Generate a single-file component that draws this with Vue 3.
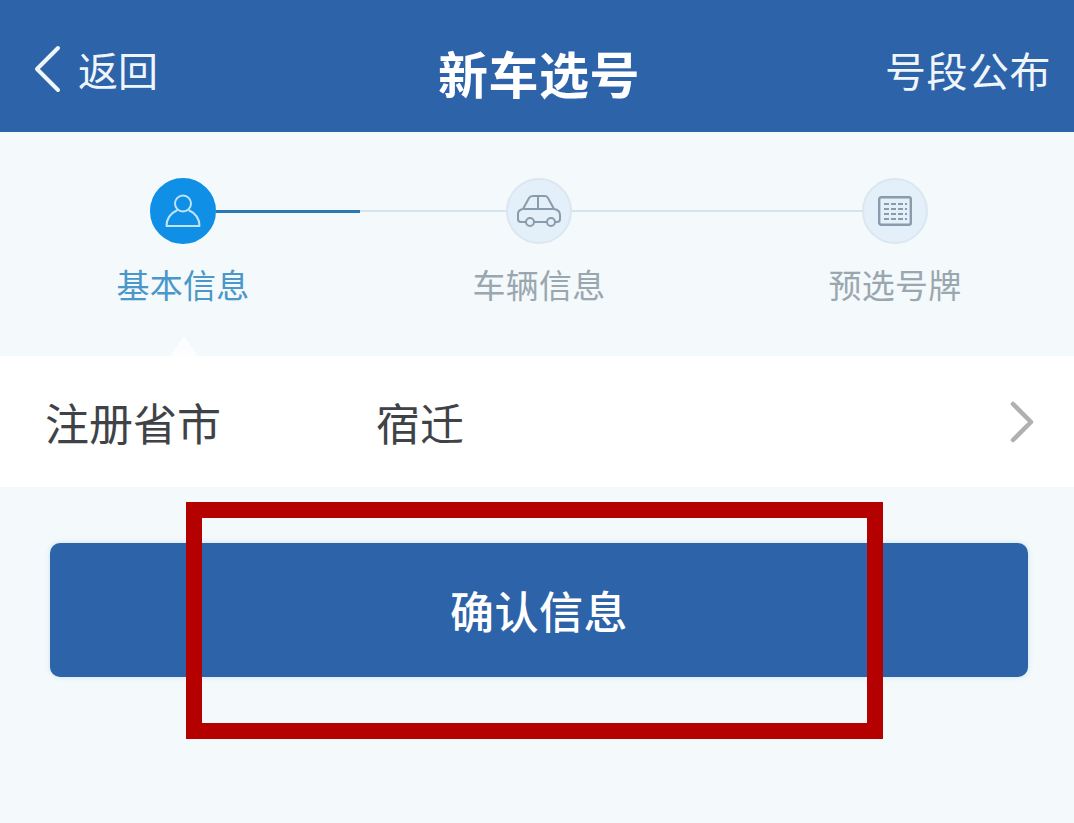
<template>
  <div class="page">
    <header class="nav">
      <div class="nav-back">
        <svg class="back-icon" width="30" height="48" viewBox="0 0 30 48">
          <path d="M26 3 L5 24 L26 45" fill="none" stroke="#f0f5f9" stroke-width="4" stroke-linecap="round" stroke-linejoin="round" />
        </svg>
        <span>返回</span>
      </div>
      <h1 class="nav-title">新车选号</h1>
      <span class="nav-action">号段公布</span>
    </header>

    <section class="steps">
      <div class="track"><div class="track-done"></div></div>
      <div v-for="step in steps" :key="step.label" class="step" :class="{ active: step.active }">
        <div class="step-circle">
          <svg v-if="step.icon === 'user'" width="36" height="36" viewBox="0 0 36 36" fill="none" stroke="#bfe3fb" stroke-width="2">
            <circle cx="18" cy="10.500" r="8" />
            <path d="M12.500 17 C6 20 1.500 25 1.500 33 H34.500 C34.500 25 30 20 23.500 17" stroke-linejoin="round" />
          </svg>
          <svg v-else-if="step.icon === 'car'" width="44" height="32" viewBox="0 0 44 32" fill="none" stroke="#8a9bab" stroke-width="2">
            <path d="M9 27 H4 Q1 27 1 24 V19 Q1 15 6 14 L12 3 Q13 1 16 1 H28 Q30 1 31 3 L37 14 Q43 15 43 20 V24 Q43 27 40 27 H38" stroke-linejoin="round" />
            <path d="M17 27 H30 M6 14 H37 M21 1 V14" />
            <circle cx="13" cy="27" r="4" />
            <circle cx="34" cy="27" r="4" />
          </svg>
          <svg v-else width="34" height="30" viewBox="0 0 34 30" fill="none" stroke="#8a9bab">
            <rect x="1.200" y="1.200" width="31.600" height="27.600" rx="2" stroke-width="2.400" />
            <path d="M6 8 H29 M6 13 H29 M6 18 H29 M6 23 H29" stroke-width="2" stroke-dasharray="5 2" />
          </svg>
        </div>
        <span class="step-label">{{ step.label }}</span>
      </div>
    </section>

    <div class="form-row">
      <i class="caret"></i>
      <span class="form-label">注册省市</span>
      <span class="form-value">宿迁</span>
      <svg class="chevron" width="24" height="42" viewBox="0 0 24 42">
        <path d="M3 3 L21 21 L3 39" fill="none" stroke="#aeb0b2" stroke-width="4.500" stroke-linecap="round" stroke-linejoin="round" />
      </svg>
    </div>

    <div class="action">
      <button class="confirm" type="button">确认信息</button>
      <div class="highlight"></div>
    </div>
  </div>
</template>

<script setup>
const steps = [
  { label: '基本信息', icon: 'user', active: true },
  { label: '车辆信息', icon: 'car', active: false },
  { label: '预选号牌', icon: 'plate', active: false }
]
</script>

<style>
html,
body {
  margin: 0;
  background: #f4f9fb;
}
</style>

<style scoped>
.page {
  height: 823px;
  overflow: hidden;
  background: #f4f9fb;
  font-family: "Noto Sans CJK SC", "Noto Sans", sans-serif;
}

.nav {
  height: 132px;
  background: #2c63a9;
  color: #f0f5f9;
  display: flex;
  align-items: center;
  justify-content: space-between;
  padding: 6px 23px 0 32px;
  box-sizing: border-box;
  position: relative;
}

.nav-back {
  display: flex;
  align-items: center;
  gap: 16px;
  font-size: 40px;
  line-height: 48px;
}

.nav-title {
  position: absolute;
  left: 438px;
  top: 42px;
  margin: 0;
  font-size: 50px;
  line-height: 60px;
  font-weight: 700;
  letter-spacing: 0.5px;
  color: #fff;
}

.nav-action {
  font-size: 41px;
  letter-spacing: 0.5px;
  line-height: 48px;
}

.steps {
  height: 224px;
  box-sizing: border-box;
  padding: 46px 0 0 5px;
  display: grid;
  grid-template-columns: repeat(3, 356px);
  position: relative;
}

.track {
  position: absolute;
  left: 216px;
  top: 78px;
  width: 646px;
  height: 2px;
  background: #d6e3ea;
}

.track-done {
  width: 144px;
  height: 3px;
  background: #2b78b4;
}

.step {
  display: flex;
  flex-direction: column;
  align-items: center;
  position: relative;
}

.step-circle {
  width: 66px;
  height: 66px;
  box-sizing: border-box;
  border-radius: 50%;
  background: #e3eff9;
  border: 2px solid #dbe7f0;
  display: flex;
  align-items: center;
  justify-content: center;
}

.step.active .step-circle {
  background: #0f8fe6;
  border-color: #0f8fe6;
}

.step-label {
  margin-top: 19px;
  font-size: 33px;
  line-height: 42px;
  letter-spacing: 0.200px;
  color: #9aa7b0;
}

.step.active .step-label {
  color: #4b97c9;
}

.form-row {
  height: 131px;
  background: #fff;
  display: flex;
  align-items: center;
  padding: 0 40px 0 45px;
  position: relative;
  font-size: 44px;
  color: #3f4347;
}

.caret {
  position: absolute;
  left: 170px;
  top: -20px;
  width: 0;
  height: 0;
  border-left: 14px solid transparent;
  border-right: 14px solid transparent;
  border-bottom: 20px solid #fbfdfe;
}

.form-label {
  width: 331px;
}

.form-value {
  flex: 1;
}

.action {
  position: relative;
  padding: 56px 46px 0 50px;
}

.confirm {
  display: block;
  width: 100%;
  height: 134px;
  border: 0;
  border-radius: 10px;
  background: #2c63a9;
  color: #fff;
  font-family: inherit;
  font-size: 44px;
  letter-spacing: 0.500px;
  font-weight: 500;
  box-shadow: 0 0 5px rgba(120, 180, 240, 0.35);
}

.highlight {
  position: absolute;
  left: 186px;
  top: 15px;
  width: 697px;
  height: 237px;
  box-sizing: border-box;
  border: 16px solid #b50000;
}
</style>
